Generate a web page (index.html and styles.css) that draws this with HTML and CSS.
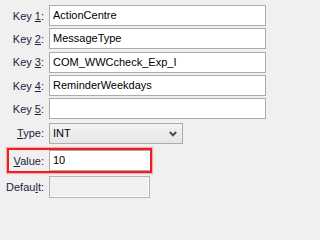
FILE: index.html
```html
<!DOCTYPE html>
<html>
<head>
<meta charset="utf-8">
<link rel="stylesheet" href="styles.css">
</head>
<body>
<div class="form">
  <div class="row"><span class="label">Key <u>1</u>:</span><div class="field wide">ActionCentre</div></div>
  <div class="row"><span class="label">Key <u>2</u>:</span><div class="field wide">MessageType</div></div>
  <div class="row"><span class="label">Key <u>3</u>:</span><div class="field wide">COM_WWCcheck_Exp_I</div></div>
  <div class="row"><span class="label">Key <u>4</u>:</span><div class="field wide">ReminderWeekdays</div></div>
  <div class="row"><span class="label">Key <u>5</u>:</span><div class="field wide"></div></div>
  <div class="row row-type"><span class="label"><u>T</u>ype:</span>
    <div class="select">INT
      <svg class="chev" width="8" height="6" viewBox="0 0 8 6"><polyline points="0.8,1 4,4.3 7.2,1" fill="none" stroke="#505050" stroke-width="2"/></svg>
    </div>
  </div>
  <div class="row row-value"><span class="label label-hl"><u>V</u>alue:</span><div class="field value">10</div></div>
  <div class="row row-default"><span class="label">Defau<u>l</u>t:</span><div class="field disabled"></div></div>
</div>
</body>
</html>
```

FILE: styles.css
```css
html, body {
  margin: 0;
  padding: 0;
  background: #f0f0f0;
}
.form {
  display: flex;
  flex-direction: column;
  padding-top: 5px;
  row-gap: 2.35px;
  font-family: "Liberation Sans", Arial, sans-serif;
  font-size: 11px;
}
.row {
  display: flex;
  align-items: center;
  height: 21px;
}
.label {
  box-sizing: border-box;
  width: 49px;
  padding-right: 5px;
  text-align: right;
  color: #1e1e3c;
}
.field {
  box-sizing: border-box;
  height: 21px;
  border: 1px solid #ababab;
  background: #fff;
  color: #000;
  padding-left: 3px;
  line-height: 19px;
  white-space: nowrap;
}
.wide {
  width: 217px;
}
.row-type {
  margin-top: 1px;
}
.select {
  box-sizing: border-box;
  position: relative;
  width: 134px;
  height: 21px;
  border: 1px solid #acacac;
  background: linear-gradient(#f3f3f3, #e6e6e6);
  color: #000;
  padding-left: 3px;
  line-height: 19px;
}
.chev {
  position: absolute;
  right: 5px;
  top: 7px;
}
.row-value {
  box-sizing: border-box;
  margin-top: 2px;
  margin-left: 7px;
  width: 145px;
  height: 25px;
  border: 2px solid #ee1c24;
  box-shadow: 0 0 1px 1px rgba(245, 90, 90, 0.45);
}
.label-hl {
  width: 40px;
}
.value {
  flex: 1;
  border-right: none;
}
.row-default {
  margin-top: 1px;
  height: 22px;
}
.disabled {
  width: 101px;
  height: 22px;
  background: #f0f0f0;
  border-color: #b4b4b4;
  box-shadow: inset -1px -1px 0 #fff;
}
```
